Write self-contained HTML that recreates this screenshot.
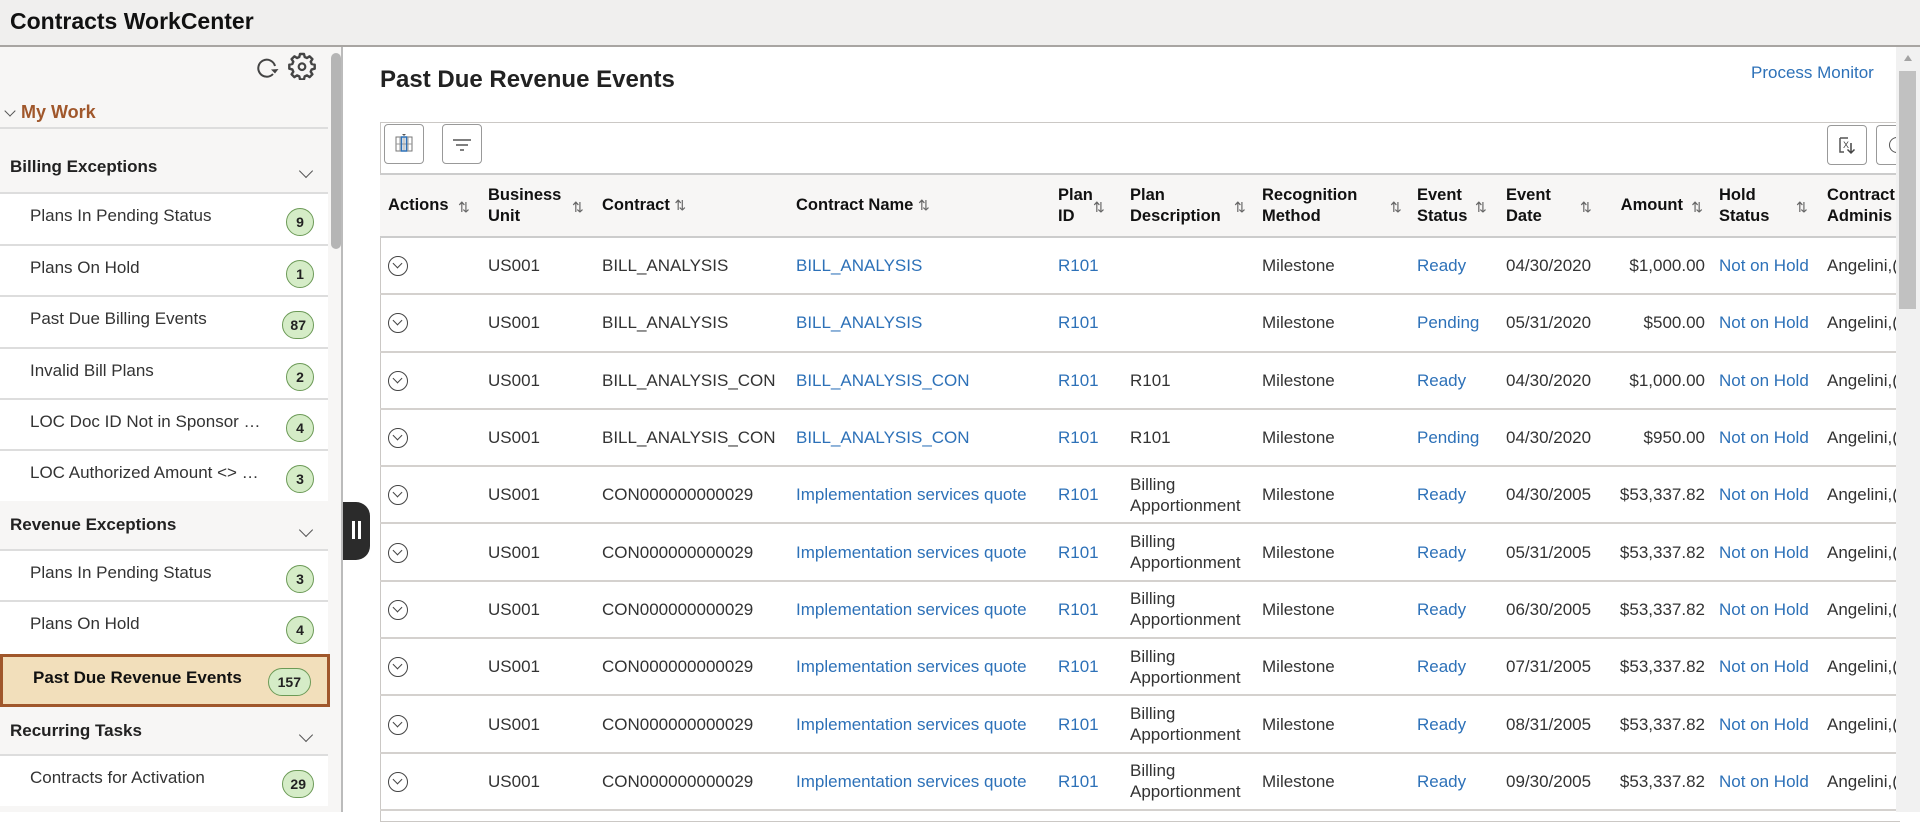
<!DOCTYPE html>
<html><head><meta charset="utf-8"><style>
*{box-sizing:border-box;margin:0;padding:0}
body{width:1920px;height:812px;overflow:hidden;font-family:"Liberation Sans",Arial,sans-serif;background:#fff;position:relative;color:#333}
.hdr{position:absolute;left:0;top:0;width:1920px;height:47px;background:#f0efee;border-bottom:2px solid #a8a5a2}
.hdr h1{position:absolute;left:10px;top:8px;font-size:23px;font-weight:bold;color:#111}
.left{position:absolute;left:0;top:47px;width:343px;height:765px;background:#f7f6f5;border-right:2px solid #bbb}
.sb{position:absolute;left:331px;top:6px;width:10px;height:196px;background:#b5b5b5;border-radius:5px}
.a{position:absolute}
.row{position:absolute;left:0;width:328px;background:#fff;border-top:2px solid #ddd;font-size:17px;color:#333}
.row span{position:absolute;left:30px;top:12px}
.badge{position:absolute;right:14px;top:14px;height:28px;min-width:28px;padding:0 7px;border-radius:14px;background:#d5ecc7;border:1px solid #6c9a57;font-size:14px;font-weight:bold;color:#222;text-align:center;line-height:26px}
.sec{position:absolute;left:10px;font-size:17px;font-weight:bold;color:#222}
.chev{position:absolute;left:301px;width:10px;height:10px;border-right:1.6px solid #555;border-bottom:1.6px solid #555;transform:rotate(45deg)}
.title{position:absolute;left:380px;top:66px;font-size:24px;font-weight:bold;color:#222}
.pm{position:absolute;left:1751px;top:63px;font-size:17px;color:#2d71b8}
.box{position:absolute;left:380px;top:122px;width:1520px;height:700px;border:1px solid #cbc8c5;border-right:none}
.btn{position:absolute;width:40px;height:40px;border:1px solid #999;border-radius:4px;background:#fff}
table{position:absolute;left:380px;top:173px;border-collapse:collapse;table-layout:fixed;width:1600px}
th{height:63px;background:#f7f6f5;font-size:16.5px;font-weight:bold;color:#111;text-align:left;vertical-align:middle;padding:0 0 0 8px;line-height:21px;border-top:2px solid #ccc;border-bottom:2px solid #ccc;position:relative}
th i{font-style:normal;font-weight:normal;color:#666;font-size:14px;position:absolute;top:22px}
td{height:57.3px;font-size:17px;color:#333;padding:0 0 0 8px;border-bottom:2px solid #d4d1ce;vertical-align:middle;white-space:nowrap;line-height:21px;overflow:hidden}
.l{color:#2d71b8}
.r{text-align:right;padding-right:6px}
.ci{display:inline-block;width:20px;height:20px;border:1.5px solid #444;border-radius:50%;position:relative;top:3px}
.ci:after{content:"";position:absolute;left:5px;top:3px;width:6px;height:6px;border-right:1.5px solid #444;border-bottom:1.5px solid #444;transform:rotate(45deg)}
.vs{position:absolute;left:1896px;top:47px;width:24px;height:765px;background:#f1f1f1}
</style></head><body>
<div class="hdr"><h1>Contracts WorkCenter</h1></div>
<div class="left">
 <svg class="a" style="left:255px;top:9px" width="24" height="24" viewBox="0 0 24 24"><path d="M20 10A8.5 8.5 0 1 0 18 18" fill="none" stroke="#444" stroke-width="2"/><path d="M16 13.5l4 4 3.5-4.5z" fill="#444"/></svg>
 <svg class="a" style="left:288px;top:5px" width="28" height="28" viewBox="0 0 28 28"><path d="M12 3h4l.7 3 2.3 1 2.6-1.7 2.8 2.8L22.7 10.7l1 2.3 3 .7v4l-3 .7-1 2.3 1.7 2.6-2.8 2.8-2.6-1.7-2.3 1-.7 3h-4l-.7-3-2.3-1-2.6 1.7-2.8-2.8 1.7-2.6-1-2.3-3-.7v-4l3-.7 1-2.3L3.6 8.1l2.8-2.8L9 7l2.3-1z" transform="translate(0 -1)" fill="none" stroke="#444" stroke-width="2.4" stroke-linejoin="round"/><circle cx="14" cy="14.7" r="3.3" fill="none" stroke="#444" stroke-width="2.2"/></svg>
 <div class="sb"></div>
 <div class="a" style="left:6px;top:60px;width:8px;height:8px;border-right:1.5px solid #555;border-bottom:1.5px solid #555;transform:rotate(45deg)"></div>
 <div class="a" style="left:21px;top:55px;font-size:18px;font-weight:bold;color:#a0572b">My Work</div>
 <div class="a" style="left:0;top:80px;width:328px;border-top:2px solid #ddd"></div>
 <div class="sec" style="top:110px">Billing Exceptions</div><div class="chev" style="top:119px"></div>
 <div class="row" style="top:145px;height:52px"><span>Plans In Pending Status</span><div class="badge">9</div></div>
 <div class="row" style="top:197px;height:52px"><span>Plans On Hold</span><div class="badge">1</div></div>
 <div class="row" style="top:248px;height:52px"><span>Past Due Billing Events</span><div class="badge">87</div></div>
 <div class="row" style="top:300px;height:52px"><span>Invalid Bill Plans</span><div class="badge">2</div></div>
 <div class="row" style="top:351px;height:52px"><span>LOC Doc ID Not in Sponsor …</span><div class="badge">4</div></div>
 <div class="row" style="top:402px;height:52px"><span>LOC Authorized Amount &lt;&gt; …</span><div class="badge">3</div></div>
 <div class="sec" style="top:468px">Revenue Exceptions</div><div class="chev" style="top:478px"></div>
 <div class="row" style="top:502px;height:52px"><span>Plans In Pending Status</span><div class="badge">3</div></div>
 <div class="row" style="top:553px;height:54px"><span>Plans On Hold</span><div class="badge">4</div></div>
 <div class="row" style="top:607px;height:53px;background:#f2dfbb;border:3px solid #a0572b;width:330px"><span style="left:30px;top:11px;font-weight:bold;color:#111">Past Due Revenue Events</span><div class="badge" style="right:16px;top:11px;padding:0 9px">157</div></div>
 <div class="sec" style="top:674px">Recurring Tasks</div><div class="chev" style="top:683px"></div>
 <div class="row" style="top:707px;height:52px"><span>Contracts for Activation</span><div class="badge">29</div></div>
</div>
<div class="a" style="left:343px;top:502px;width:27px;height:58px;background:#2b2b2b;border-radius:0 14px 14px 0"><div class="a" style="left:9px;top:19px;width:3px;height:18px;background:#fff"></div><div class="a" style="left:15px;top:19px;width:3px;height:18px;background:#fff"></div></div>
<div class="title">Past Due Revenue Events</div>
<div class="pm">Process Monitor</div>
<div class="box"></div>
<div class="btn" style="left:384px;top:124px"><svg width="38" height="38" viewBox="0 0 38 38"><rect x="11" y="12" width="16" height="14" fill="none" stroke="#777"/><path d="M15 12v14M19 12v14M23 12v14M11 19h16" stroke="#999"/><rect x="16.5" y="12" width="5" height="14" fill="none" stroke="#2d71b8" stroke-width="1.5"/><path d="M17 9l2 2 2-2z" fill="#555"/></svg></div>
<div class="btn" style="left:442px;top:124px"><svg width="38" height="38" viewBox="0 0 38 38"><path d="M10 15h18M13 20h12M17 25h4" stroke="#555" stroke-width="1.5"/></svg></div>
<div class="btn" style="left:1827px;top:125px"><svg width="38" height="38" viewBox="0 0 38 38"><path d="M12 12h8M12 12v14h4" fill="none" stroke="#555" stroke-width="1.5"/><text x="15" y="22" font-size="9" fill="#444" font-family="Liberation Sans">X</text><path d="M23 17v10M19.5 23.5l3.5 3.5 3.5-3.5" fill="none" stroke="#444" stroke-width="1.5"/></svg></div>
<div class="btn" style="left:1876px;top:125px;width:30px;border-right:none"><div class="a" style="left:12px;top:11px;width:16px;height:16px;border:1.5px solid #555;border-radius:50%"></div></div>
<table>
<colgroup><col style="width:100px"><col style="width:114px"><col style="width:194px"><col style="width:262px"><col style="width:72px"><col style="width:132px"><col style="width:155px"><col style="width:89px"><col style="width:102px"><col style="width:111px"><col style="width:108px"><col style="width:161px"></colgroup>
<tr><th>Actions<i style="left:78px">⇅</i></th><th>Business<br>Unit<i style="left:92px">⇅</i></th><th>Contract <i style="position:static">⇅</i></th><th>Contract Name <i style="position:static">⇅</i></th><th>Plan<br>ID<i style="left:43px">⇅</i></th><th>Plan<br>Description<i style="left:112px">⇅</i></th><th>Recognition<br>Method<i style="left:136px">⇅</i></th><th>Event<br>Status<i style="left:66px">⇅</i></th><th>Event<br>Date<i style="left:82px">⇅</i></th><th style="text-align:right;padding-right:28px">Amount<i style="right:8px">⇅</i></th><th>Hold<br>Status<i style="left:85px">⇅</i></th><th>Contract<br>Adminis</th></tr>
<tr><td><span class="ci"></span></td><td>US001</td><td>BILL_ANALYSIS</td><td class="l">BILL_ANALYSIS</td><td class="l">R101</td><td></td><td>Milestone</td><td class="l">Ready</td><td>04/30/2020</td><td class="r">$1,000.00</td><td class="l">Not on Hold</td><td>Angelini,(</td></tr>
<tr><td><span class="ci"></span></td><td>US001</td><td>BILL_ANALYSIS</td><td class="l">BILL_ANALYSIS</td><td class="l">R101</td><td></td><td>Milestone</td><td class="l">Pending</td><td>05/31/2020</td><td class="r">$500.00</td><td class="l">Not on Hold</td><td>Angelini,(</td></tr>
<tr><td><span class="ci"></span></td><td>US001</td><td>BILL_ANALYSIS_CON</td><td class="l">BILL_ANALYSIS_CON</td><td class="l">R101</td><td>R101</td><td>Milestone</td><td class="l">Ready</td><td>04/30/2020</td><td class="r">$1,000.00</td><td class="l">Not on Hold</td><td>Angelini,(</td></tr>
<tr><td><span class="ci"></span></td><td>US001</td><td>BILL_ANALYSIS_CON</td><td class="l">BILL_ANALYSIS_CON</td><td class="l">R101</td><td>R101</td><td>Milestone</td><td class="l">Pending</td><td>04/30/2020</td><td class="r">$950.00</td><td class="l">Not on Hold</td><td>Angelini,(</td></tr>
<tr><td><span class="ci"></span></td><td>US001</td><td>CON000000000029</td><td class="l">Implementation services quote</td><td class="l">R101</td><td>Billing<br>Apportionment</td><td>Milestone</td><td class="l">Ready</td><td>04/30/2005</td><td class="r">$53,337.82</td><td class="l">Not on Hold</td><td>Angelini,(</td></tr>
<tr><td><span class="ci"></span></td><td>US001</td><td>CON000000000029</td><td class="l">Implementation services quote</td><td class="l">R101</td><td>Billing<br>Apportionment</td><td>Milestone</td><td class="l">Ready</td><td>05/31/2005</td><td class="r">$53,337.82</td><td class="l">Not on Hold</td><td>Angelini,(</td></tr>
<tr><td><span class="ci"></span></td><td>US001</td><td>CON000000000029</td><td class="l">Implementation services quote</td><td class="l">R101</td><td>Billing<br>Apportionment</td><td>Milestone</td><td class="l">Ready</td><td>06/30/2005</td><td class="r">$53,337.82</td><td class="l">Not on Hold</td><td>Angelini,(</td></tr>
<tr><td><span class="ci"></span></td><td>US001</td><td>CON000000000029</td><td class="l">Implementation services quote</td><td class="l">R101</td><td>Billing<br>Apportionment</td><td>Milestone</td><td class="l">Ready</td><td>07/31/2005</td><td class="r">$53,337.82</td><td class="l">Not on Hold</td><td>Angelini,(</td></tr>
<tr><td><span class="ci"></span></td><td>US001</td><td>CON000000000029</td><td class="l">Implementation services quote</td><td class="l">R101</td><td>Billing<br>Apportionment</td><td>Milestone</td><td class="l">Ready</td><td>08/31/2005</td><td class="r">$53,337.82</td><td class="l">Not on Hold</td><td>Angelini,(</td></tr>
<tr><td><span class="ci"></span></td><td>US001</td><td>CON000000000029</td><td class="l">Implementation services quote</td><td class="l">R101</td><td>Billing<br>Apportionment</td><td>Milestone</td><td class="l">Ready</td><td>09/30/2005</td><td class="r">$53,337.82</td><td class="l">Not on Hold</td><td>Angelini,(</td></tr>
</table>
<div class="vs"><div class="a" style="left:8px;top:8px;border:4px solid transparent;border-bottom:6px solid #a3a3a3;border-top:none"></div><div class="a" style="left:3px;top:24px;width:17px;height:238px;background:#c1c1c1"></div></div>
</body></html>
